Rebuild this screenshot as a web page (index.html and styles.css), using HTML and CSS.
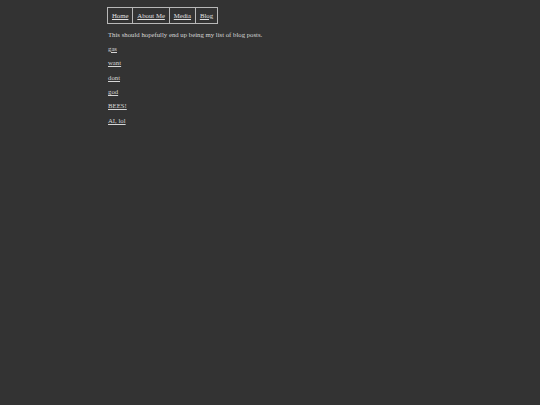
FILE: index.html
```html
<!DOCTYPE html>
<html>
<head>
<meta charset="utf-8">
<title>Blog</title>
<link rel="stylesheet" href="styles.css">
</head>
<body>
<div class="container">
  <nav class="nav">
    <a class="nav-item" href="#">Home</a>
    <a class="nav-item" href="#">About Me</a>
    <a class="nav-item" href="#">Media</a>
    <a class="nav-item" href="#">Blog</a>
  </nav>
  <p class="intro">This should hopefully end up being my list of blog posts.</p>
  <p class="post"><a href="#">gas</a></p>
  <p class="post"><a href="#">want</a></p>
  <p class="post"><a href="#">dont</a></p>
  <p class="post"><a href="#">god</a></p>
  <p class="post"><a href="#">BEES!</a></p>
  <p class="post"><a href="#">AI, lol</a></p>
</div>
</body>
</html>
```
FILE: styles.css
```css
html, body {
  margin: 0;
  padding: 0;
  background: #333333;
}
body {
  color: #d6d6d6;
  font-family: "Liberation Serif", "Times New Roman", serif;
  font-size: 6.75px;
  line-height: 1.13;
}
.container {
  width: 60%;
  margin: 0 auto;
  padding-top: 7px;
}
.nav {
  display: inline-flex;
  border: 1px solid #b8b8b8;
  margin-left: -1px;
}
.nav-item {
  color: #e0e0e0;
  padding: 3.6px 3.95px;
  border-right: 1px solid #b8b8b8;
}
.nav-item:last-child {
  border-right: none;
}
a {
  color: #d6d6d6;
}
.intro {
  margin: 6.75px 0;
}
.post {
  margin: 6.75px 0;
}
```
